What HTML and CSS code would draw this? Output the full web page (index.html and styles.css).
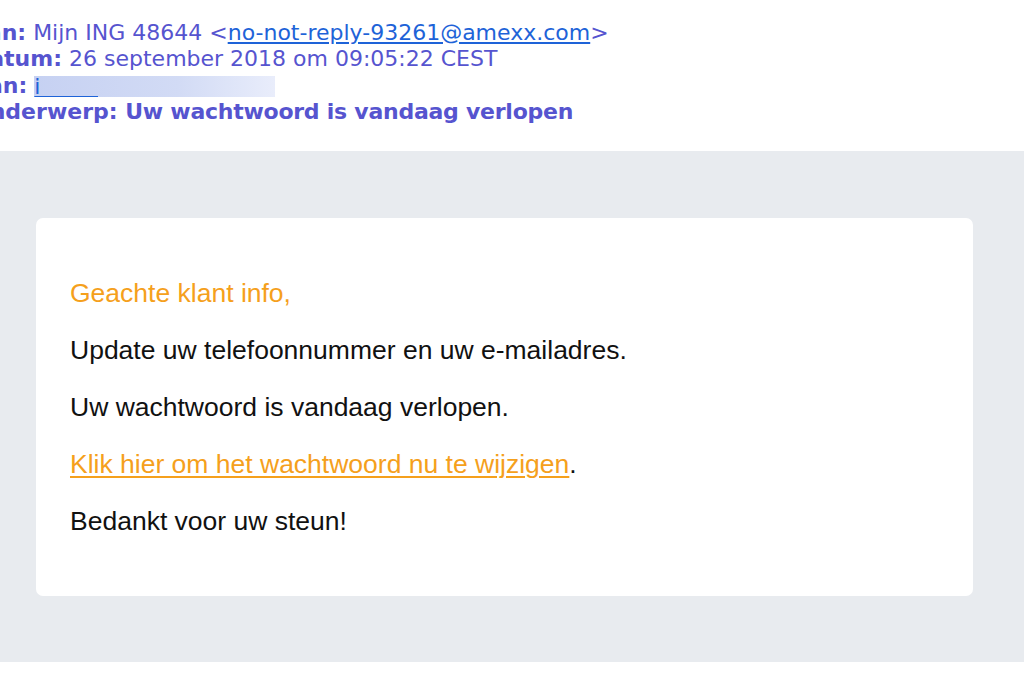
FILE: index.html
```html
<!DOCTYPE html>
<html lang="nl">
<head>
<meta charset="utf-8">
<title>Uw wachtwoord is vandaag verlopen</title>
<link rel="stylesheet" href="styles.css">
</head>
<body>
<header class="headers">
  <div class="hrow"><span class="label">Van:</span> <span class="value">Mijn ING 48644 &lt;<a class="mail" href="#">no-not-reply-93261@amexx.com</a>&gt;</span></div>
  <div class="hrow"><span class="label">Datum:</span> <span class="value">26 september 2018 om 09:05:22 CEST</span></div>
  <div class="hrow"><span class="label">Aan:</span> <span class="value"><span class="blur"><a class="mail short" href="#">i&nbsp;&nbsp;&nbsp;&nbsp;&nbsp;&nbsp;&nbsp;&nbsp;&nbsp;&nbsp;</a></span></span></div>
  <div class="hrow subject"><span class="label">Onderwerp:</span> <span class="value subj-text">Uw wachtwoord is vandaag verlopen</span></div>
</header>
<main class="stage">
  <section class="card">
    <p class="greet">Geachte klant info,</p>
    <p>Update uw telefoonnummer en uw e-mailadres.</p>
    <p>Uw wachtwoord is vandaag verlopen.</p>
    <p><a class="cta" href="#">Klik hier om het wachtwoord nu te wijzigen</a>.</p>
    <p>Bedankt voor uw steun!</p>
  </section>
</main>
</body>
</html>
```
FILE: styles.css
```css
html, body {
  margin: 0;
  padding: 0;
  background: #ffffff;
}
body {
  width: 1024px;
  height: 683px;
  overflow: hidden;
}
.headers {
  font-family: "DejaVu Sans", Verdana, sans-serif;
  font-size: 22px;
  line-height: 26.5px;
  color: #5654cf;
  padding-top: 19.5px;
  height: 132px;
  box-sizing: border-box;
  margin-left: -29px;
}
.hrow {
  white-space: nowrap;
}
.label {
  font-weight: bold;
}
.subject {
  font-weight: bold;
}
.subj-text {
  letter-spacing: -0.25px;
}
.mail {
  color: #1e63d8;
  text-decoration: underline;
  text-underline-offset: 2px;
}
.blur {
  display: inline-block;
  width: 241px;
  height: 21px;
  vertical-align: -4px;
  background: linear-gradient(90deg, #c6d1f2 0%, #d2dbf5 60%, #e9edfb 100%);
  line-height: 21px;
}
.short {
  display: inline-block;
  width: 64px;
  overflow: hidden;
  color: #1e63d8;
}
.stage {
  margin-top: 18.5px;
  background: #e8ebef;
  height: 511px;
  padding: 67px 51px 0 36px;
  box-sizing: border-box;
}
.card {
  background: #ffffff;
  border-radius: 7px;
  height: 378px;
  box-sizing: border-box;
  padding: 60px 34px 0 34px;
  font-family: "Liberation Sans", Arial, sans-serif;
  font-size: 26.5px;
  line-height: 30px;
  color: #111111;
}
.card p {
  margin: 0 0 27px 0;
}
.greet {
  color: #f5a01c;
}
.cta {
  color: #f5a01c;
  text-decoration: underline;
  text-underline-offset: 3px;
  text-decoration-thickness: 1.5px;
}
```
